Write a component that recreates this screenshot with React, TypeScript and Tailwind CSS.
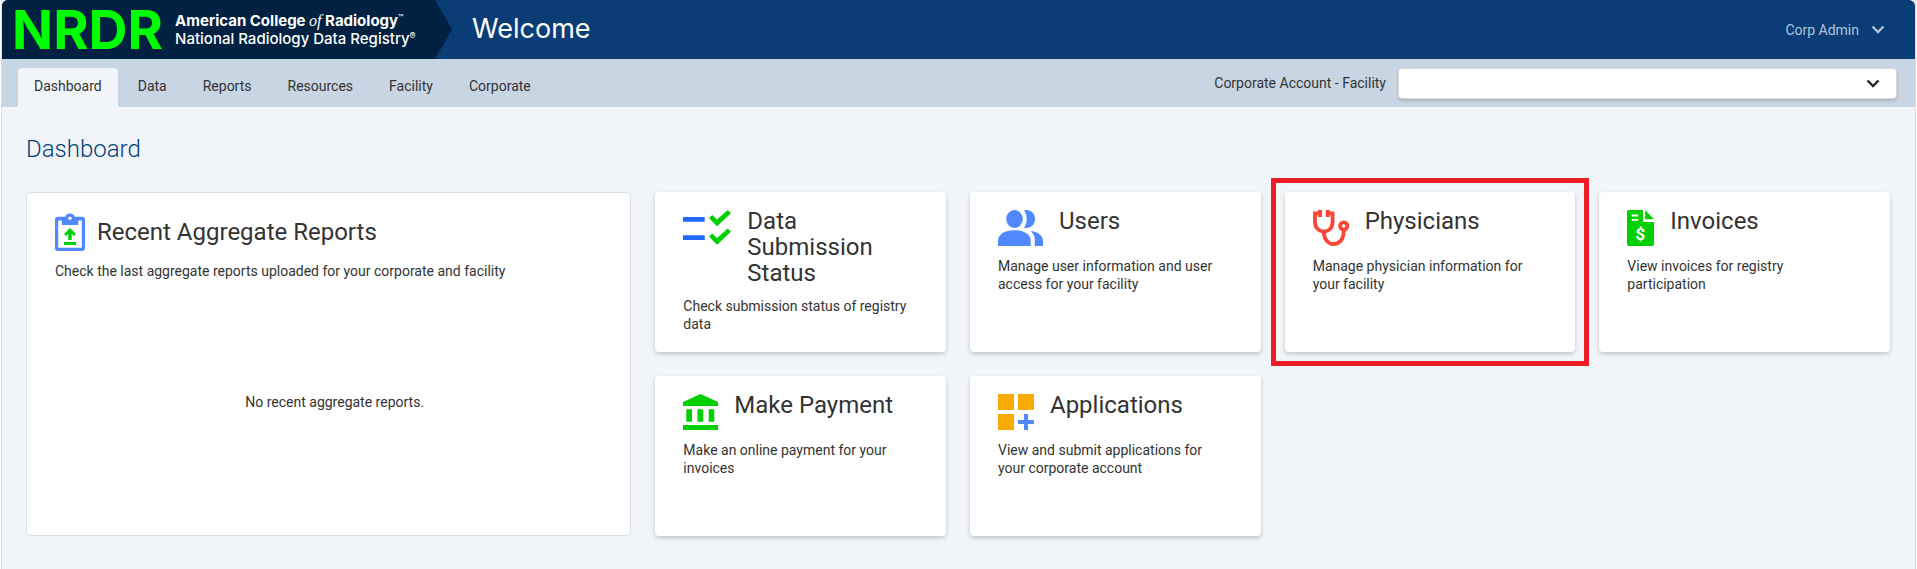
import { useState } from "react";
import type { ReactNode } from "react";

interface CardItem {
  title:        string;
  description:  string;
  icon:         ReactNode;
  highlighted?: boolean;
}

const NAV_ITEMS = ["Dashboard", "Data", "Reports", "Resources", "Facility", "Corporate"];

function ChevronIcon() {
  return (
    <svg width="14" height="9" viewBox="0 0 14 9" fill="none" stroke="currentColor" strokeWidth="2.4" aria-hidden="true">
      <path d="M1.500 1.500 7 7l5.500-5.500" />
    </svg>
  );
}

function ClipboardIcon() {
  return (
    <svg width="30" height="38" viewBox="0 0 30 38" className="shrink-0" aria-hidden="true">
      <path
        fill="#4f88ff"
        fillRule="evenodd"
        d="M3 3.700H10.300A5 5 0 0 1 19.700 3.700H27a3 3 0 0 1 3 3V35a3 3 0 0 1-3 3H3a3 3 0 0 1-3-3V6.700a3 3 0 0 1 3-3ZM3.200 7.500V34.700H26.800V7.500H23.200V12H6.800V7.500ZM15 3.400a1.800 1.800 0 1 0 0 3.600 1.800 1.800 0 0 0 0-3.600Z"
      />
      <path fill="#00cf00" d="M15 15l6 6-2 2-2.300-2.200V27h-3.400v-6.200L11 23l-2-2ZM9 29h12v3H9Z" />
    </svg>
  );
}

function ChecklistIcon() {
  return (
    <svg width="48" height="36" viewBox="0 0 48 36" aria-hidden="true">
      <path fill="#2268ff" d="M0 7h21.700v4.700H0ZM0 25.300h21.700V30H0Z" />
      <path
        fill="#00cf00"
        d="M26 8l3.300-3 4.700 4.600L44.800 0 48 3.300 34 16.300ZM26 26.500l3.300-3 4.700 4.600 10.800-9.600L48 21.800l-14 13Z"
      />
    </svg>
  );
}

function UsersIcon() {
  return (
    <svg width="45" height="36" viewBox="0 0 45 36" fill="#4f88ff" aria-hidden="true">
      <ellipse cx="16.500" cy="9" rx="8.300" ry="9" />
      <path d="M26 .3C32-1 37 3 37 9s-5 10-11 8.700C29.500 13.500 29.500 4.500 26 .3Z" />
      <path d="M0 36v-5C0 23 9 20.300 16.300 20.300S32.700 23 32.700 31v5Z" />
      <path d="M32.700 21C41 22 45 26 45 31v5h-8.200v-6c0-4-1.500-6.500-4.100-9Z" />
    </svg>
  );
}

function StethoscopeIcon() {
  return (
    <svg width="36" height="36" viewBox="0 0 36 36" fill="none" stroke="#fa4636" strokeWidth="3.8" aria-hidden="true">
      <path d="M8 3.400H2V12c0 6 4 9.500 8.800 9.500s8.800-3.500 8.800-9.500V3.400h-6" />
      <path d="M10.800 21.500C10.800 29 15 34 20.500 34s10.200-4.500 10.200-13" />
      <circle cx="30.700" cy="16" r="3.600" />
      <path fill="#fa4636" stroke="none" d="M5 0h4v7H5ZM12.700 0h4v7h-4Z" />
    </svg>
  );
}

function InvoiceIcon() {
  return (
    <svg width="27" height="36" viewBox="0 0 27 36" fill="#00cf00" aria-hidden="true">
      <path d="M2 0h14v10.500a1.500 1.500 0 0 0 1.500 1.500H27v22a2 2 0 0 1-2 2H2a2 2 0 0 1-2-2V2a2 2 0 0 1 2-2Z" />
      <path d="M18.200 0 27 9.300h-8.800Z" />
      <path fill="#fff" d="M4.700 4.600h6.600v1.800H4.700ZM4.700 9h6.600v1.800H4.700Z" />
      <text x="13.500" y="30" textAnchor="middle" fill="#fff" className="font-[Roboto] text-[17px] font-bold">
        $
      </text>
    </svg>
  );
}

function BankIcon() {
  return (
    <svg width="35" height="36" viewBox="0 0 35 36" fill="#00cf00" aria-hidden="true">
      <path d="M17.500 0 35 8v4H0V8ZM3.300 15.200H9v12.500H3.300ZM14.500 15.200h5.700v12.500h-5.700ZM25.700 15.200h5.600v12.500h-5.600ZM0 31h35v5H0Z" />
    </svg>
  );
}

function ApplicationsIcon() {
  return (
    <svg width="36" height="36" viewBox="0 0 36 36" aria-hidden="true">
      <path fill="#f9ab05" d="M0 0h16v16H0ZM20 0h16v16H20ZM0 20h16v16H0Z" />
      <path fill="#4f88ff" d="M26 20h4v6h6v4h-6v6h-4v-6h-6v-4h6Z" />
    </svg>
  );
}

const CARDS: CardItem[] = [
  {
    title:       "Data Submission Status",
    description: "Check submission status of registry data",
    icon:        <ChecklistIcon />,
  },
  {
    title:       "Users",
    description: "Manage user information and user access for your facility",
    icon:        <UsersIcon />,
  },
  {
    title:       "Physicians",
    description: "Manage physician information for your facility",
    icon:        <StethoscopeIcon />,
    highlighted: true,
  },
  {
    title:       "Invoices",
    description: "View invoices for registry participation",
    icon:        <InvoiceIcon />,
  },
  {
    title:       "Make Payment",
    description: "Make an online payment for your invoices",
    icon:        <BankIcon />,
  },
  {
    title:       "Applications",
    description: "View and submit applications for your corporate account",
    icon:        <ApplicationsIcon />,
  },
];

function DashboardCard({ title, description, icon, highlighted }: CardItem) {
  return (
    <a
      href="#"
      className="relative block min-h-40 rounded bg-white pt-4 pr-9 pl-7 shadow-[0_2px_4px_rgba(0,0,0,0.2)]"
    >
      <div className="flex items-start gap-4">
        <span className="shrink-0 pt-[2px] [&>svg]:block">{icon}</span>
        <h2 className="text-2xl leading-[26px]">{title}</h2>
      </div>
      <p className="mt-[11px] text-sm leading-[18px]">{description}</p>
      {highlighted && (
        <span className="pointer-events-none absolute -inset-[14px] border-[5px] border-[#ed1c24]" />
      )}
    </a>
  );
}

function Header() {
  return (
    <header className="flex h-[59px] items-stretch rounded-t-md bg-[#0a3c76]">
      <div className="flex w-[433px] shrink-0 items-center gap-3 rounded-tl-md bg-[#002142] pl-[10px] text-white">
        <span className="font-[Inter] text-[54px] leading-[59px] font-bold text-[#00ff00]">NRDR</span>
        <div className="font-[Inter] text-[15px] leading-[18px] whitespace-nowrap">
          <p className="font-bold">
            American College <i className="font-['Liberation_Serif'] text-base leading-none font-normal">of</i> Radiology
            <sup className="text-[9px] font-normal">™</sup>
          </p>
          <p className="font-medium">
            National Radiology Data Registry<sup className="text-[9px]">®</sup>
          </p>
        </div>
      </div>
      <svg width="17" height="59" viewBox="0 0 17 59" fill="#002142" aria-hidden="true">
        <path d="M0 0 17 29.500 0 59Z" />
      </svg>
      <h1 className="flex items-center pb-[2px] pl-5 font-[Inter] text-[27px] leading-8 text-white">Welcome</h1>
      <button type="button" className="ml-auto flex items-center gap-3 pr-[30px] text-sm text-[#b0c4db]">
        Corp Admin
        <ChevronIcon />
      </button>
    </header>
  );
}

export default function App() {
  const [activeTab, setActiveTab] = useState("Dashboard");

  return (
    <div className="mx-px min-h-screen border-x border-[#dcdcdc] bg-[#f1f5fa] font-[Roboto,sans-serif] text-[#333]">
      <Header />

      <div className="flex h-12 justify-between bg-[#c8d5e3] pt-[9px] pr-[18px] pl-4">
        <nav className="flex gap-1">
          {NAV_ITEMS.map(item => (
            <button
              key={item}
              type="button"
              onClick={() => setActiveTab(item)}
              className={`rounded-t px-4 pb-[3px] text-sm ${item === activeTab ? "bg-[#f1f5fa]" : ""}`}
            >
              {item}
            </button>
          ))}
        </nav>

        <div className="flex h-[31px] items-center gap-3">
          <label htmlFor="facility" className="pb-px text-sm">Corporate Account - Facility</label>
          <div className="relative">
            <select
              id="facility"
              className="block h-[31px] w-[499px] appearance-none rounded border border-[#d3d9df] bg-white px-3 text-sm shadow-[0_2px_3px_rgba(0,0,0,0.15)]"
            />
            <span className="pointer-events-none absolute inset-y-0 right-[17px] flex items-center text-[#222]">
              <ChevronIcon />
            </span>
          </div>
        </div>
      </div>

      <main className="pt-[29px] pr-[25px] pb-8 pl-6">
        <h1 className="text-2xl leading-[26px] font-light text-[#00427c]">Dashboard</h1>

        <div className="mt-[30px] grid grid-cols-3 gap-6">
          <section className="flex flex-col rounded border border-[#dcdfe2] bg-white pt-5 pr-4 pb-3 pl-7">
            <div className="flex items-center gap-3">
              <ClipboardIcon />
              <h2 className="text-2xl leading-[26px]">Recent Aggregate Reports</h2>
            </div>
            <p className="mt-[11px] text-sm leading-[18px]">
              Check the last aggregate reports uploaded for your corporate and facility
            </p>
            <p className="flex flex-1 items-center justify-center text-sm leading-[18px]">
              No recent aggregate reports.
            </p>
          </section>

          <div className="col-span-2 grid grid-cols-4 gap-6">
            {CARDS.map(card => (
              <DashboardCard key={card.title} {...card} />
            ))}
          </div>
        </div>
      </main>
    </div>
  );
}
